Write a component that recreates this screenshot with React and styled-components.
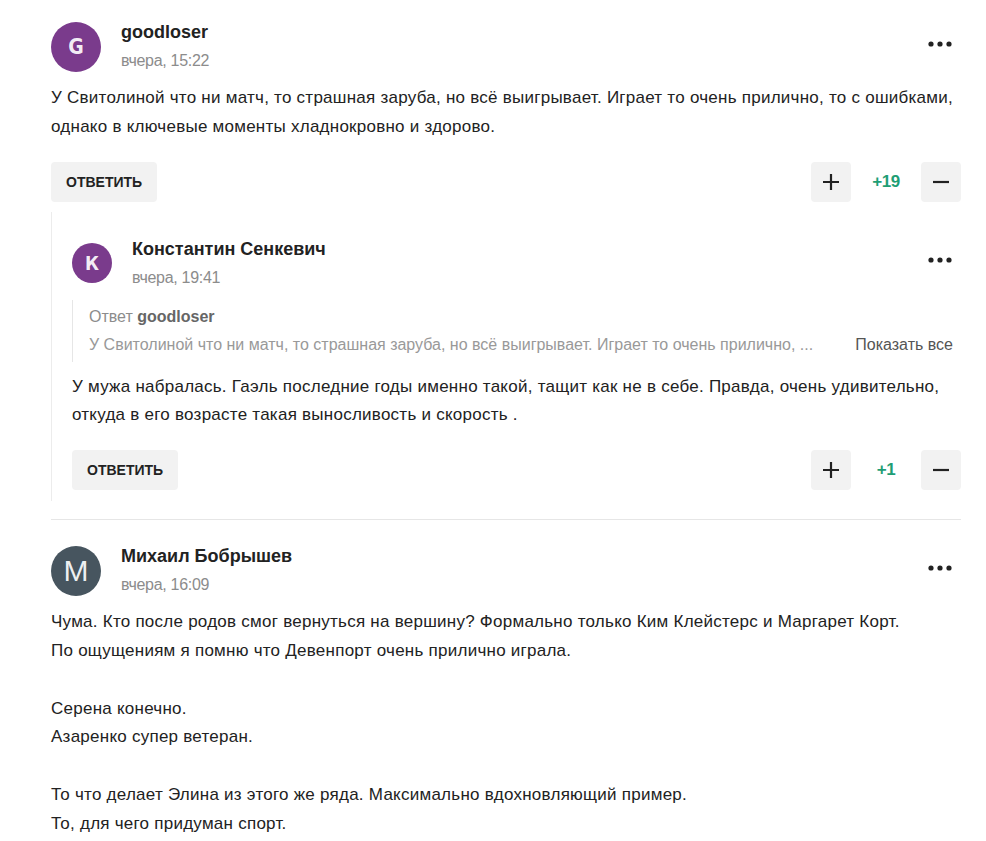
import styled, { createGlobalStyle } from "styled-components";

const GlobalStyle = createGlobalStyle`
  body {
    margin: 0;
    background: #fff;
    font-family: "Liberation Sans", Arial, sans-serif;
    color: #222;
  }
`;

// preview of the quoted comment is cut to one line
const shorten = (text, max) =>
  text.length > max ? text.slice(0, max).trimEnd() + " ..." : text;

const comments = [
  {
    id: 1,
    author: "goodloser",
    letter: "G",
    avatarColor: "#7a3b8c",
    time: "вчера, 15:22",
    text:
      "У Свитолиной что ни матч, то страшная заруба, но всё выигрывает. Играет то очень прилично, то с ошибками, однако в ключевые моменты хладнокровно и здорово.",
    rating: "+19",
    replies: [
      {
        id: 2,
        author: "Константин Сенкевич",
        letter: "К",
        avatarColor: "#7a3b8c",
        time: "вчера, 19:41",
        quote: {
          author: "goodloser",
          text:
            "У Свитолиной что ни матч, то страшная заруба, но всё выигрывает. Играет то очень прилично, то с ошибками, однако в ключевые моменты хладнокровно и здорово.",
        },
        text:
          "У мужа набралась. Гаэль последние годы именно такой, тащит как не в себе. Правда, очень удивительно, откуда в его возрасте такая выносливость и скорость .",
        rating: "+1",
      },
    ],
  },
  {
    id: 3,
    author: "Михаил Бобрышев",
    letter: "M",
    thinLetter: true,
    avatarColor: "#47555f",
    time: "вчера, 16:09",
    text:
      "Чума. Кто после родов смог вернуться на вершину? Формально только Ким Клейстерс и Маргарет Корт.\nПо ощущениям я помню что Девенпорт очень прилично играла.\n\nСерена конечно.\nАзаренко супер ветеран.\n\nТо что делает Элина из этого же ряда. Максимально вдохновляющий пример.\nТо, для чего придуман спорт.",
    replies: [],
  },
];

const MoreDots = () => (
  <MoreButton aria-label="Ещё">
    <svg width="24" height="6" viewBox="0 0 24 6">
      <circle cx="3" cy="3" r="2.6" fill="#222" />
      <circle cx="12" cy="3" r="2.6" fill="#222" />
      <circle cx="21" cy="3" r="2.6" fill="#222" />
    </svg>
  </MoreButton>
);

const CommentHeader = ({ c, small }) => (
  <Header>
    <Avatar $color={c.avatarColor} $small={small} $thin={c.thinLetter}>
      {c.letter}
    </Avatar>
    <Meta>
      <Author>{c.author}</Author>
      <Time>{c.time}</Time>
    </Meta>
    <MoreDots />
  </Header>
);

const CommentActions = ({ rating }) => (
  <Actions>
    <ReplyButton>Ответить</ReplyButton>
    <Votes>
      <VoteButton aria-label="плюс">
        <svg width="18" height="18" viewBox="0 0 18 18">
          <path d="M9 1v16M1 9h16" stroke="#222" strokeWidth="2.2" />
        </svg>
      </VoteButton>
      <Rating>{rating}</Rating>
      <VoteButton aria-label="минус">
        <svg width="18" height="18" viewBox="0 0 18 18">
          <path d="M1 9h16" stroke="#222" strokeWidth="2.2" />
        </svg>
      </VoteButton>
    </Votes>
  </Actions>
);

const ReplyComment = ({ r }) => (
  <Reply>
    <CommentHeader c={r} small />
    <Quote>
      <div>
        Ответ <QuoteAuthor>{r.quote.author}</QuoteAuthor>
      </div>
      <QuoteRow>
        <QuoteText>{shorten(r.quote.text, 90)}</QuoteText>
        <ShowAll>Показать все</ShowAll>
      </QuoteRow>
    </Quote>
    <Body>{r.text}</Body>
    <CommentActions rating={r.rating} />
  </Reply>
);

const App = () => (
  <Page>
    <GlobalStyle />
    {comments.map((c, i) => (
      <Comment key={c.id} $divider={i > 0}>
        <CommentHeader c={c} />
        <Body>{c.text}</Body>
        {c.rating && <CommentActions rating={c.rating} />}
        {c.replies.map((r) => (
          <ReplyComment key={r.id} r={r} />
        ))}
      </Comment>
    ))}
  </Page>
);

const Page = styled.div`
  width: 910px;
  padding: 20px 0 0 51px;
`;

const Comment = styled.article`
  display: flex;
  flex-direction: column;
  ${(p) =>
    p.$divider &&
    `
    margin-top: 18px;
    padding-top: 24px;
    border-top: 1px solid #e6e6e6;
  `}
`;

const Header = styled.div`
  display: flex;
  align-items: center;
  gap: 20px;
`;

const Avatar = styled.div`
  flex: none;
  width: ${(p) => (p.$small ? 40 : 50)}px;
  height: ${(p) => (p.$small ? 40 : 50)}px;
  border-radius: 50%;
  background: ${(p) => p.$color};
  color: rgba(255, 255, 255, 0.92);
  display: flex;
  align-items: center;
  justify-content: center;
  font-family: ${(p) =>
    p.$thin
      ? '"Liberation Sans", Arial, sans-serif'
      : '"DejaVu Sans Condensed", "Liberation Sans", sans-serif'};
  font-weight: ${(p) => (p.$thin ? 400 : 700)};
  font-size: ${(p) => (p.$thin ? 30 : p.$small ? 19 : 21)}px;
`;

const Meta = styled.div`
  flex: 1;
  display: flex;
  flex-direction: column;
  gap: 5px;
`;

const Author = styled.div`
  font-size: 18px;
  line-height: 24px;
  font-weight: 700;
  color: #222;
`;

const Time = styled.div`
  font-size: 16px;
  line-height: 24px;
  color: #8c8c8c;
  letter-spacing: -0.3px;
`;

const MoreButton = styled.button`
  border: 0;
  background: none;
  padding: 0 9px 6px 0;
  display: flex;
  cursor: pointer;
`;

const Body = styled.div`
  margin-top: 11px;
  font-size: 17px;
  line-height: 28.8px;
  letter-spacing: 0.25px;
  white-space: pre-line;
  color: #222;
`;

const Actions = styled.div`
  display: flex;
  justify-content: space-between;
  align-items: center;
  margin-top: 20px;
`;

const ReplyButton = styled.button`
  height: 40px;
  padding: 0 15px;
  border: 0;
  border-radius: 4px;
  background: #f2f2f2;
  font-family: "Liberation Sans", Arial, sans-serif;
  font-size: 14px;
  font-weight: 700;
  text-transform: uppercase;
  color: #222;
  cursor: pointer;
`;

const Votes = styled.div`
  display: flex;
  align-items: center;
`;

const VoteButton = styled.button`
  width: 40px;
  height: 40px;
  border: 0;
  border-radius: 4px;
  background: #f2f2f2;
  display: flex;
  align-items: center;
  justify-content: center;
  cursor: pointer;
`;

const Rating = styled.span`
  width: 70px;
  text-align: center;
  font-size: 17px;
  font-weight: 700;
  letter-spacing: -0.5px;
  color: #1f9e75;
`;

const Reply = styled.div`
  margin-top: 10px;
  padding: 25px 0 11px 20px;
  border-left: 1px solid #ececec;
`;

const Quote = styled.div`
  margin-top: 10px;
  padding: 3px 0 3px 16px;
  border-left: 1px solid #e6e6e6;
  font-size: 16px;
  line-height: 28px;
  color: #8c8c8c;
`;

const QuoteAuthor = styled.b`
  color: #666;
`;

const QuoteRow = styled.div`
  display: flex;
  align-items: center;
  gap: 20px;
`;

const QuoteText = styled.div`
  flex: 1;
  min-width: 0;
  white-space: nowrap;
  overflow: hidden;
  text-overflow: ellipsis;
  color: #999;
`;

const ShowAll = styled.span`
  flex: none;
  padding-right: 8px;
  color: #555;
`;

export default App;
